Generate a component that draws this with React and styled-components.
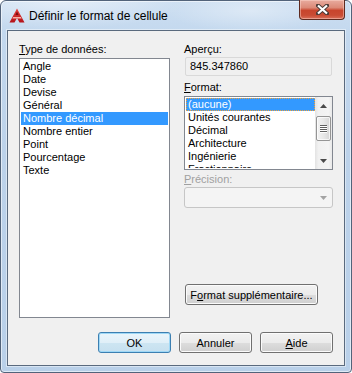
import React from "react";
import styled, {createGlobalStyle} from "styled-components";

const GlobalStyle = createGlobalStyle`
    html, body {
        margin: 0;
        padding: 0;
        background: #ffffff;
    }
    body {
        font-family: "Liberation Sans", Arial, sans-serif;
        font-size: 11px;
        color: #000;
    }
`;

const Window = styled.div`
    width: 352px;
    height: 373px;
    box-sizing: border-box;
    display: flex;
    flex-direction: column;
    padding: 0 6px 6px;
    border: 1px solid #52637a;
    border-radius: 6px 6px 4px 4px;
    background:
        radial-gradient(ellipse 180px 40px at 60px 0, rgba(255, 255, 255, 0.45), transparent 70%),
        radial-gradient(ellipse 120px 30px at 250px 10px, rgba(255, 255, 255, 0.35), transparent 70%),
        linear-gradient(180deg, #cddff2 0%, #c3d8ee 9%, #bcd2ea 40%, #b9d0e9 100%);
    box-shadow: inset 0 0 0 1px rgba(255, 255, 255, 0.55);
`;

const TitleBar = styled.div`
    height: 29px;
    flex-shrink: 0;
    display: flex;
    align-items: center;
`;

const AppIcon = styled.svg`
    margin-left: 2px;
    flex-shrink: 0;
`;

const Title = styled.span`
    margin-left: 4px;
    font-size: 12px;
    color: #000;
`;

const CloseButton = styled.div`
    margin-left: auto;
    align-self: flex-start;
    margin-top: -1px;
    width: 46px;
    height: 20px;
    box-sizing: border-box;
    border: 1px solid #5e2a1f;
    border-top: none;
    border-radius: 0 0 4px 4px;
    background: linear-gradient(180deg, #e8ac9f 0%, #dc8a78 40%, #c8452d 55%, #c94b33 80%, #d9705a 100%);
    box-shadow: inset 0 0 0 1px rgba(255, 220, 210, 0.45);
    display: flex;
    align-items: center;
    justify-content: center;
`;

const Client = styled.div`
    flex: 1;
    display: flex;
    flex-direction: column;
    border: 1px solid #5a6a7e;
    background: #f0f0f0;
    padding: 11px 11px 12px 11px;
    box-shadow: 0 0 0 1px rgba(255, 255, 255, 0.45);
`;

const Body = styled.div`
    display: flex;
    gap: 14px;
    height: 276px;
`;

const Column = styled.div`
    width: ${(p) => p.$width}px;
    display: flex;
    flex-direction: column;
`;

const FieldLabel = styled.div`
    height: 15px;
    line-height: 15px;
    margin-top: ${(p) => p.$top || 0}px;
    margin-bottom: ${(p) => p.$bottom || 0}px;
    color: ${(p) => (p.$disabled ? "#a0a0a0" : "#000")};
    white-space: nowrap;
`;

const Key = styled.span`
    text-decoration: underline;
    text-underline-offset: 1px;
`;

const ListBox = styled.div`
    box-sizing: border-box;
    height: ${(p) => p.$height}px;
    border: 1px solid #828790;
    background: #fff;
    display: flex;
    overflow: hidden;
`;

const Items = styled.ul`
    flex: 1;
    list-style: none;
    margin: 1px 0 1px 1px;
    padding: 0 ${(p) => (p.$scroll ? 0 : 1)}px 0 0;
    overflow: hidden;
`;

const Item = styled.li`
    height: 13px;
    line-height: 13px;
    padding-left: 2px;
    white-space: nowrap;
    background: ${(p) => (p.$selected ? "#3399ff" : "transparent")};
    color: ${(p) => (p.$selected ? "#fff" : "#000")};
    outline: ${(p) => (p.$focus ? "1px dotted #f2a23a" : "none")};
    outline-offset: -1px;
`;

const ScrollBar = styled.div`
    width: 17px;
    flex-shrink: 0;
    display: flex;
    flex-direction: column;
    align-items: center;
    background: linear-gradient(90deg, #e3e3e3 0%, #f1f1f1 20%, #f4f4f4 80%, #e9e9e9 100%);
`;

const ScrollArrow = styled.div`
    width: 17px;
    height: 17px;
    display: flex;
    align-items: center;
    justify-content: center;
    margin-top: ${(p) => (p.$down ? "auto" : "0")};
`;

const Thumb = styled.div`
    box-sizing: border-box;
    width: 15px;
    height: 25px;
    margin-top: 2px;
    border: 1px solid #959595;
    border-radius: 2px;
    background: linear-gradient(90deg, #f3f3f3 0%, #e8e8e8 50%, #d6d6d6 100%);
    box-shadow: inset 0 0 0 1px rgba(255, 255, 255, 0.7);
    display: flex;
    flex-direction: column;
    align-items: center;
    justify-content: center;
    gap: 1px;
`;

const Grip = styled.div`
    width: 7px;
    height: 1px;
    background: #5f5f5f;
    box-shadow: 0 1px 0 #fff;
`;

const Preview = styled.div`
    box-sizing: border-box;
    height: 19px;
    margin-left: 1px;
    width: 147px;
    border: 1px solid #d9d9d9;
    border-radius: 2px;
    background: #f0f0f0;
    line-height: 17px;
    padding-left: 4px;
`;

const Combo = styled.div`
    box-sizing: border-box;
    height: 21px;
    border: 1px solid #c6c6c6;
    border-radius: 3px;
    background: #f4f4f4;
    display: flex;
    align-items: center;
    justify-content: flex-end;
    padding-right: 5px;
`;

const Button = styled.button`
    box-sizing: border-box;
    width: ${(p) => p.$width || 73}px;
    height: 21px;
    padding: 0;
    margin: 0;
    font-family: "Liberation Sans", Arial, sans-serif;
    font-size: 11px;
    color: #000;
    border-radius: 3px;
    border: 1px solid ${(p) => (p.$primary ? "#3c7fb1" : "#707070")};
    background: ${(p) =>
        p.$primary
            ? "linear-gradient(180deg, #eaf5fb 0%, #e0eff8 50%, #cde5f2 52%, #c6e0ef 100%)"
            : "linear-gradient(180deg, #f2f2f2 0%, #ebebeb 50%, #dddddd 52%, #cfcfcf 100%)"};
    box-shadow: inset 0 0 0 1px ${(p) => (p.$primary ? "#9fd8f6" : "#fbfbfb")};
`;

const SideButton = styled(Button)`
    margin-top: 76px;
    margin-left: 1px;
    text-align: center;
`;

const Footer = styled.div`
    margin-top: 14px;
    display: flex;
    justify-content: flex-end;
    gap: 8px;
`;

const types = ["Angle", "Date", "Devise", "Général", "Nombre décimal", "Nombre entier", "Point", "Pourcentage", "Texte"];
const formats = ["(aucune)", "Unités courantes", "Décimal", "Architecture", "Ingénierie", "Fractionnaire"];

function Arrow({down, color = "#4a4a4a"}) {
    return (
        <svg width="7" height="4" viewBox="0 0 7 4">
            <polygon points={down ? "0,0 7,0 3.5,4" : "0,4 7,4 3.5,0"} fill={color}/>
        </svg>
    );
}

export default function App() {
    return (
        <>
            <GlobalStyle/>
            <Window>
                <TitleBar>
                    <AppIcon width="16" height="15" viewBox="0 0 16 15">
                        <defs>
                            <linearGradient id="ac" x1="0" y1="0" x2="0" y2="1">
                                <stop offset="0" stopColor="#e8423c"/>
                                <stop offset="1" stopColor="#b3121a"/>
                            </linearGradient>
                        </defs>
                        <polygon points="8,0.5 15.5,14.5 10.5,14.5 8,10 5.5,14.5 0.5,14.5" fill="url(#ac)"/>
                        <polygon points="4.2,9 11.8,9 12.6,10.5 3.4,10.5" fill="#f6b3a8"/>
                        <polygon points="8,3.5 9.6,7 6.4,7" fill="#7a0c10"/>
                    </AppIcon>
                    <Title>Définir le format de cellule</Title>
                    <CloseButton>
                        <svg width="13" height="11" viewBox="0 0 13 11">
                            <path d="M2 1.5 L11 9.5 M11 1.5 L2 9.5" stroke="#4b3a36" strokeWidth="4" strokeLinecap="square"/>
                            <path d="M2 1.5 L11 9.5 M11 1.5 L2 9.5" stroke="#ffffff" strokeWidth="2.2"/>
                        </svg>
                    </CloseButton>
                </TitleBar>
                <Client>
                    <Body>
                        <Column $width={151}>
                            <FieldLabel $bottom={1}><Key>T</Key>ype de données:</FieldLabel>
                            <ListBox $height={260}>
                                <Items>
                                    {types.map((t) => (
                                        <Item key={t} $selected={t === "Nombre décimal"}>{t}</Item>
                                    ))}
                                </Items>
                            </ListBox>
                        </Column>
                        <Column $width={149}>
                            <FieldLabel>Aperçu:</FieldLabel>
                            <Preview>845.347860</Preview>
                            <FieldLabel $top={4} $bottom={1}><Key>F</Key>ormat:</FieldLabel>
                            <ListBox $height={74}>
                                <Items $scroll>
                                    {formats.map((f) => (
                                        <Item key={f} $selected={f === "(aucune)"} $focus={f === "(aucune)"}>{f}</Item>
                                    ))}
                                </Items>
                                <ScrollBar>
                                    <ScrollArrow><Arrow/></ScrollArrow>
                                    <Thumb>
                                        <Grip/>
                                        <Grip/>
                                        <Grip/>
                                        <Grip/>
                                    </Thumb>
                                    <ScrollArrow $down><Arrow down/></ScrollArrow>
                                </ScrollBar>
                            </ListBox>
                            <FieldLabel $top={2} $disabled><Key>P</Key>récision:</FieldLabel>
                            <Combo><Arrow down color="#a3a3a3"/></Combo>
                            <SideButton $width={133}>F<Key>o</Key>rmat supplémentaire...</SideButton>
                        </Column>
                    </Body>
                    <Footer>
                        <Button $primary>OK</Button>
                        <Button>Annuler</Button>
                        <Button><Key>A</Key>ide</Button>
                    </Footer>
                </Client>
            </Window>
        </>
    );
}
